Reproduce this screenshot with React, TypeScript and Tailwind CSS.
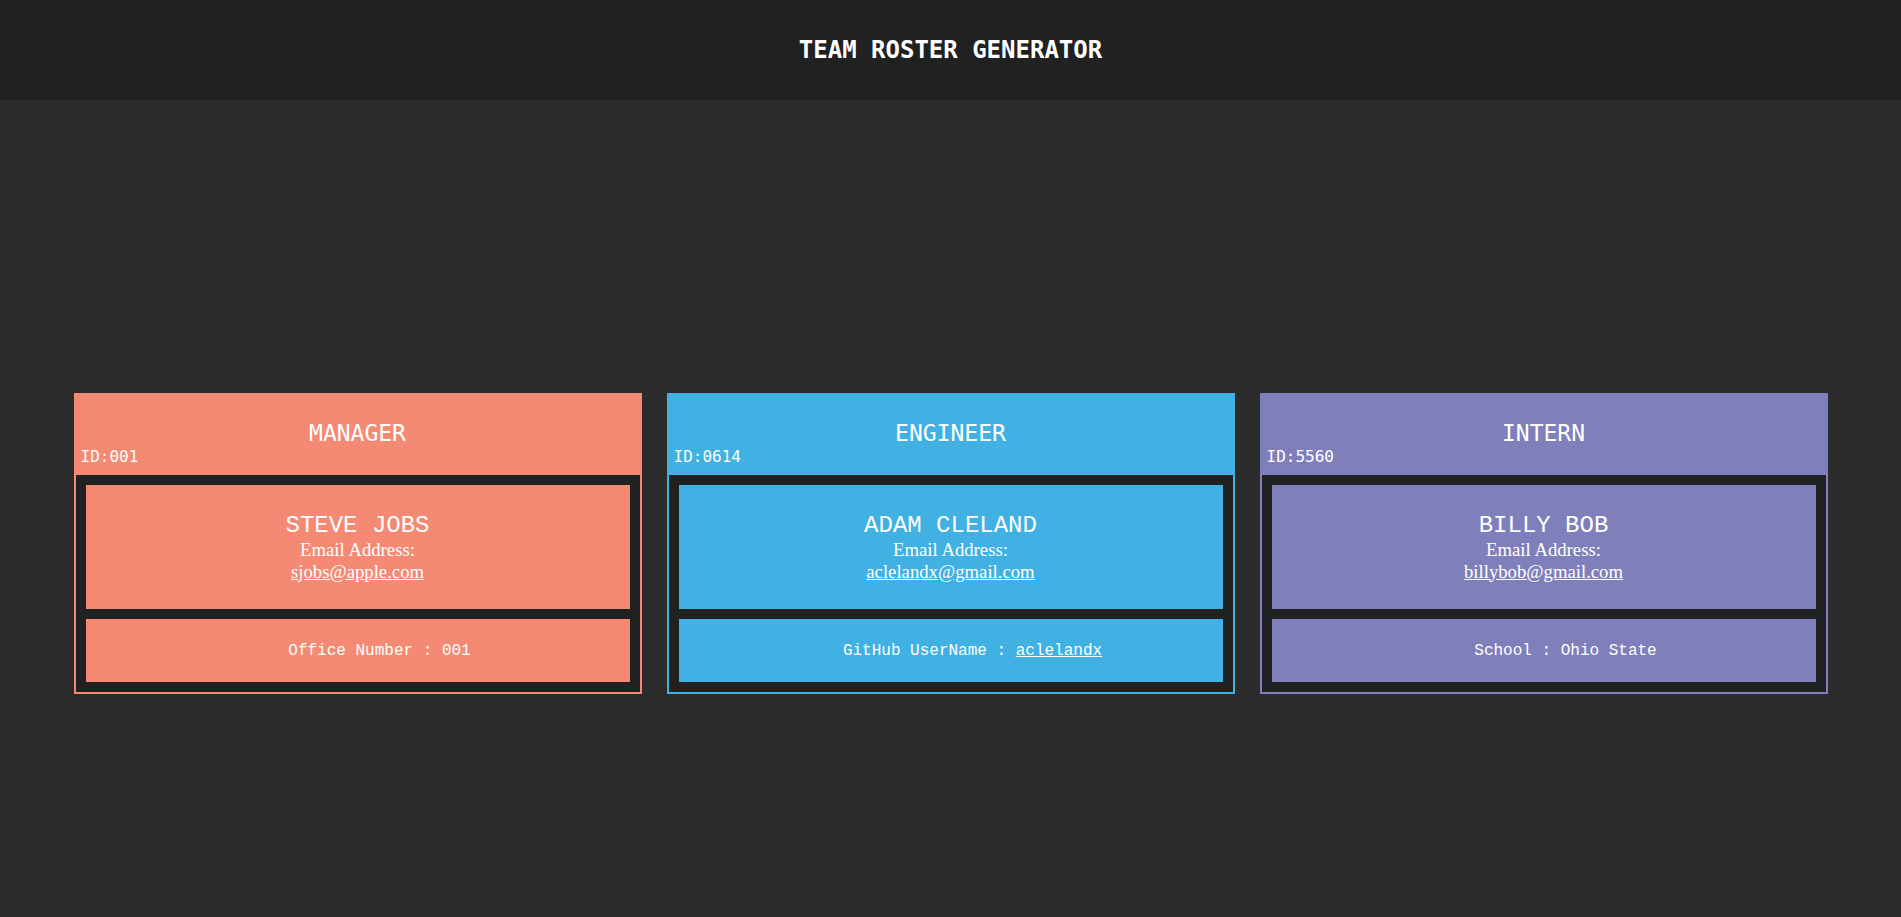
import React from 'react';

type Member = {
  role: string;
  id: string;
  name: string;
  email: string;
  color: string;
  extra: React.ReactNode;
};

const team: Member[] = [
  {
    role: 'MANAGER',
    id: '001',
    name: 'STEVE JOBS',
    email: 'sjobs@apple.com',
    color: 'salmon',
    extra: <>Office Number : 001</>,
  },
  {
    role: 'ENGINEER',
    id: '0614',
    name: 'ADAM CLELAND',
    email: 'aclelandx@gmail.com',
    color: 'blue',
    extra: (
      <>
        GitHub UserName : <a href="#" className="underline">aclelandx</a>
      </>
    ),
  },
  {
    role: 'INTERN',
    id: '5560',
    name: 'BILLY BOB',
    email: 'billybob@gmail.com',
    color: 'purple',
    extra: <>School : Ohio State</>,
  },
];

const palette: Record<string, { border: string; bg: string }> = {
  salmon: { border: 'border-[#f48a73]', bg: 'bg-[#f48a73]' },
  blue: { border: 'border-[#41b0e3]', bg: 'bg-[#41b0e3]' },
  purple: { border: 'border-[#7f7fbb]', bg: 'bg-[#7f7fbb]' },
};

const MemberCard: React.FC<{ member: Member }> = ({ member }) => {
  const c = palette[member.color];
  return (
    <div className={`w-[568px] border-2 ${c.border} ${c.bg} text-white`}>
      <div className="h-[80px] pt-[25px] font-['DejaVu_Sans_Mono',monospace]">
        <h2 className="text-center text-[23px] leading-[27px]">{member.role}</h2>
        <p className="pl-[5px] text-[16px] leading-5">ID:{member.id}</p>
      </div>
      <div className="bg-[#202221] p-[10px] flex flex-col gap-[10px]">
        <div className={`${c.bg} h-[124px] flex flex-col items-center justify-center text-center`}>
          <h3 className="font-['Liberation_Mono',monospace] text-[24px] leading-[27px] font-normal">
            {member.name}
          </h3>
          <p className="font-['Liberation_Serif',serif] text-[18.72px] leading-[21.5px]">Email Address:</p>
          <a href="#" className="block font-['Liberation_Serif',serif] text-[18.72px] leading-[21.5px] underline">
            {member.email}
          </a>
        </div>
        <ul className={`${c.bg} h-[63px] flex items-center justify-center pl-[44px]`}>
          <li className="font-['Liberation_Mono',monospace] text-[16px] leading-5">{member.extra}</li>
        </ul>
      </div>
    </div>
  );
};

const App: React.FC = () => {
  return (
    <div className="min-h-screen bg-[#2a2b2a]">
      <header className="h-[100px] bg-[#202121] flex items-center justify-center">
        <h1 className="text-white text-[24px] font-bold font-['DejaVu_Sans_Mono',monospace]">
          TEAM ROSTER GENERATOR
        </h1>
      </header>
      <main className="pt-[293px] flex justify-center gap-[25px]">
        {team.map((m) => (
          <MemberCard key={m.id} member={m} />
        ))}
      </main>
    </div>
  );
};

export default App;
